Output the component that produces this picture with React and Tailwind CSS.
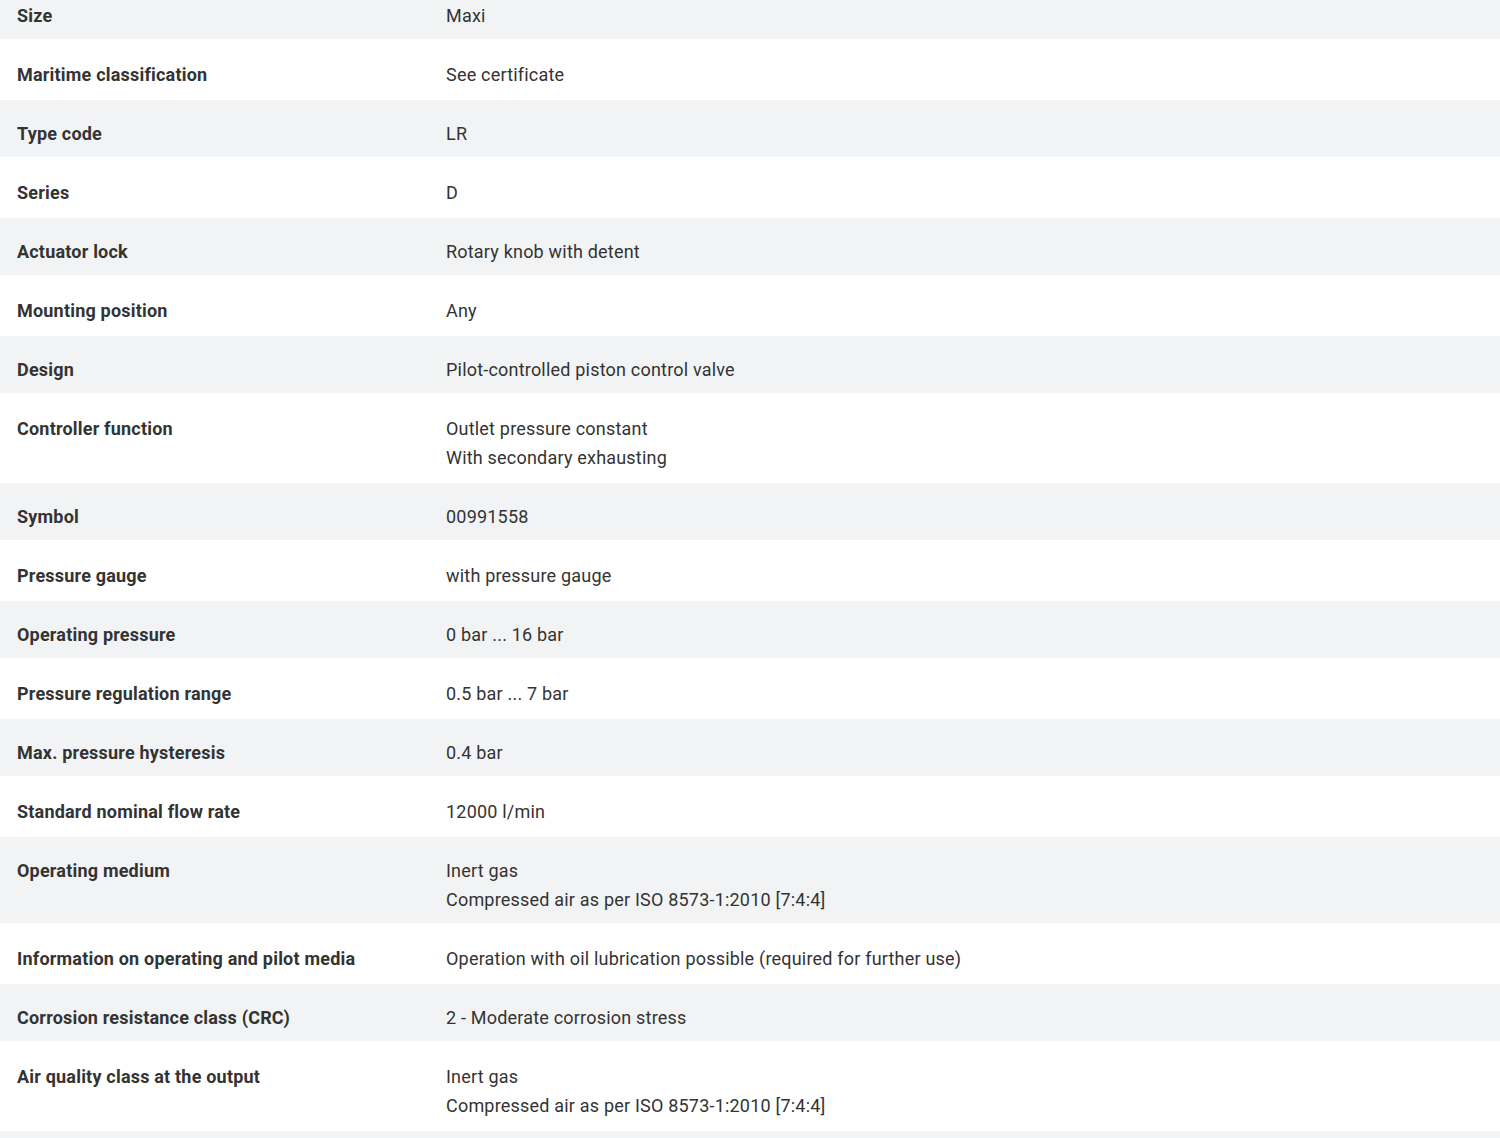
import React from "react";

const specs = [
  { label: "Size", value: ["Maxi"] },
  { label: "Maritime classification", value: ["See certificate"] },
  { label: "Type code", value: ["LR"] },
  { label: "Series", value: ["D"] },
  { label: "Actuator lock", value: ["Rotary knob with detent"] },
  { label: "Mounting position", value: ["Any"] },
  { label: "Design", value: ["Pilot-controlled piston control valve"] },
  { label: "Controller function", value: ["Outlet pressure constant", "With secondary exhausting"] },
  { label: "Symbol", value: ["00991558"] },
  { label: "Pressure gauge", value: ["with pressure gauge"] },
  { label: "Operating pressure", value: ["0 bar ... 16 bar"] },
  { label: "Pressure regulation range", value: ["0.5 bar ... 7 bar"] },
  { label: "Max. pressure hysteresis", value: ["0.4 bar"] },
  { label: "Standard nominal flow rate", value: ["12000 l/min"] },
  { label: "Operating medium", value: ["Inert gas", "Compressed air as per ISO 8573-1:2010 [7:4:4]"] },
  { label: "Information on operating and pilot media", value: ["Operation with oil lubrication possible (required for further use)"] },
  { label: "Corrosion resistance class (CRC)", value: ["2 - Moderate corrosion stress"] },
  { label: "Air quality class at the output", value: ["Inert gas", "Compressed air as per ISO 8573-1:2010 [7:4:4]"] },
  { label: "", value: [""] },
];

export default function App() {
  return (
    <div
      className="w-[1500px] h-[1138px] overflow-hidden bg-white text-[#333333]"
      style={{ fontFamily: '"Roboto", sans-serif' }}
    >
      {/* Spec table, first row partly scrolled off */}
      <div className="-mt-[18px]">
        {specs.map((row, i) => (
          <div
            key={i}
            className={`flex text-[18px] leading-[29px] tracking-[0.2px] ${
              i % 2 === 0 ? "bg-[#f2f3f4] pt-[19px] pb-[9px]" : "bg-white pt-[21px] pb-[11px]"
            }`}
          >
            <div className="w-[446px] pl-[17px] pr-4 font-bold shrink-0">{row.label}</div>
            <div className="flex-1">
              {row.value.map((v, j) => (
                <div key={j}>{v || "\u00a0"}</div>
              ))}
            </div>
          </div>
        ))}
      </div>
    </div>
  );
}
